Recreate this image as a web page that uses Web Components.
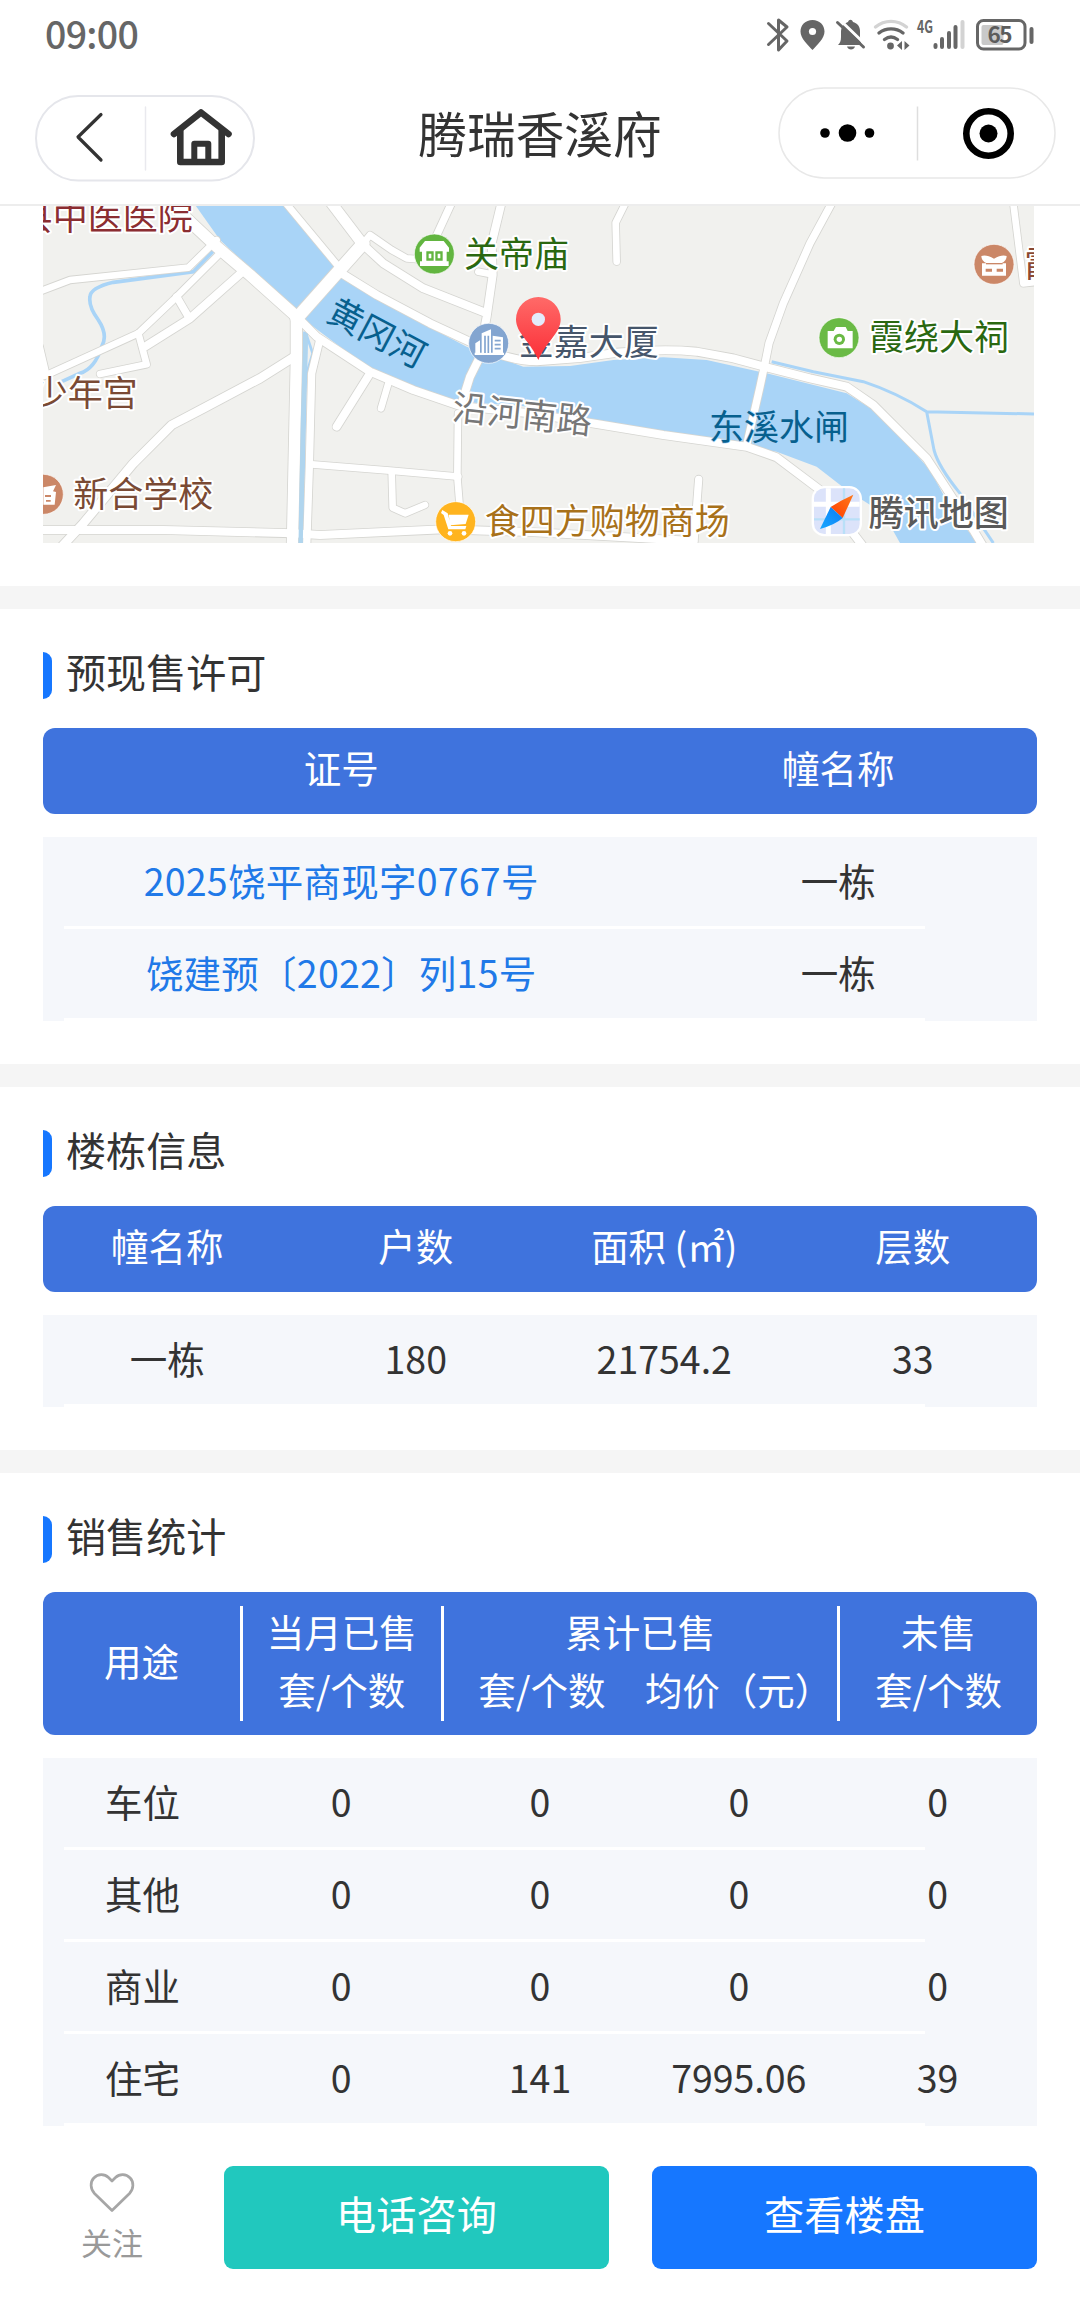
<!DOCTYPE html>
<html lang="zh-CN">
<head>
<meta charset="utf-8">
<title>腾瑞香溪府</title>
<style>
html,body{margin:0;padding:0;background:#fff}
body{width:1080px;height:2298px;overflow:hidden;font-family:"Noto Sans CJK SC","Noto Sans",sans-serif;color:#333}
</style>
</head>
<body>
<house-page></house-page>
<script>
const define=(name,html)=>customElements.define(name,class extends HTMLElement{
  constructor(){super();this.attachShadow({mode:'open'}).innerHTML=html;}
});

define('status-bar',`<style>
:host{display:flex;justify-content:space-between;align-items:flex-start;height:60px;padding:0 44px 0 45px;color:#666}
.time{font-size:37.500px;font-weight:500;line-height:60px;height:60px;margin-top:3px;letter-spacing:-.7px}
svg{display:block}
text{font-family:"Noto Sans CJK SC",sans-serif}
</style>
<div class="time">09:00</div>
<svg width="272" height="60" viewBox="764 0 272 60" fill="none" stroke="#666" stroke-linecap="round" stroke-linejoin="round">
  <path d="M768.500 23.500L787 41l-8.500 9V20l8.500 7-18.500 17.500" stroke-width="3"/>
  <path d="M812.500 20c-7 0-12 5-12 11.500 0 7 7 13 12 18.500 5-5.500 12-11.500 12-18.500C824.500 25 819.500 20 812.500 20z" fill="#666" stroke="none"/>
  <circle cx="812.500" cy="31.500" r="3.600" fill="#fff" stroke="none"/>
  <path d="M838 45c2-2 3-4 3-8v-5c0-6 4-9 7-10 1-3 4-3 5 0 4 1 7 4 7 9v6c0 4 1 6 2 8z" fill="#666" stroke="none"/>
  <path d="M847 46.500h8c-1 4-7 4-8 0z" fill="#666" stroke="none"/>
  <path d="M840 20l27 26" stroke="#fff" stroke-width="3"/>
  <path d="M837.500 22.500L863.500 47" stroke-width="3"/>
  <path d="M875.500 27c9-7.500 22-7.500 31 0" stroke="#d3d3d3" stroke-width="3.400"/>
  <path d="M879 33c7-5.500 17-5.500 24 0M884.500 39.500c4-3 9-3 13 0" stroke-width="3.400"/>
  <circle cx="890.500" cy="46" r="3.400" fill="#666" stroke="none"/>
  <path d="M902 41v9l-5-4.500zM904.500 41v9l5-4.500z" fill="#666" stroke="none"/>
  <text x="917" y="33" font-size="17" font-weight="700" fill="#666" stroke="none" textLength="16" lengthAdjust="spacingAndGlyphs">4G</text>
  <path d="M935.500 45v2M942 39v8M949 33v14M955.500 27v20" stroke-width="4"/>
  <path d="M962.500 22v25" stroke="#d3d3d3" stroke-width="4"/>
  <rect x="977.500" y="20.500" width="47.500" height="28.500" rx="6" stroke-width="3"/>
  <rect x="981.500" y="25" width="22" height="20" rx="2" fill="#c9c9c9" stroke="none"/>
  <path d="M1031.500 29v13" stroke-width="4"/>
  <text x="987.500" y="43" font-size="22.500" font-weight="600" fill="#5c5c5c" stroke="none" textLength="25">65</text>
</svg>`);

define('nav-bar',`<style>
:host{display:flex;justify-content:space-between;align-items:flex-start;box-sizing:border-box;height:146px;padding:0 24px 0 35px;border-bottom:2px solid #ededed}
h1{margin:0;font-size:48.700px;font-weight:400;line-height:70px;padding-top:37px;color:#333}
.start{width:270px;display:flex}
.end{width:281px;display:flex;justify-content:flex-end}
.back{margin-top:35px}.menu{margin-top:27px}
svg{display:block}
</style>
<div class="start"><svg class="back" width="220" height="87" viewBox="35 95 220 87" fill="none" stroke="#333" stroke-linejoin="round" stroke-linecap="round">
  <rect x="36" y="96" width="218" height="84.500" rx="42.200" stroke="#e5e6eb" stroke-width="2"/>
  <path d="M145.500 107v63" stroke="#e9e9ee" stroke-width="1.500"/>
  <path d="M101 114.500L78 137l23 23" stroke-width="3.200"/>
  <path d="M174 134L201 112.500l27.500 21.500" stroke-width="6.600"/>
  <path d="M180.300 131v31h41.400v-31" stroke-width="6.600"/>
  <path d="M194.300 162v-18.200h14V162" stroke-width="6"/>
</svg></div>
<h1>腾瑞香溪府</h1>
<div class="end"><svg class="menu" width="278" height="92" viewBox="778 87 278 92">
  <rect x="779" y="88" width="276" height="90" rx="45" fill="#fff" stroke="#e8e8e8" stroke-width="1.500"/>
  <path d="M917.500 106.500v54" stroke="#dedede" stroke-width="1.500"/>
  <circle cx="825" cy="133" r="4.800"/><circle cx="847.500" cy="133" r="8.800"/><circle cx="869.500" cy="133" r="4.800"/>
  <circle cx="988.500" cy="133.500" r="22.200" fill="none" stroke="#000" stroke-width="6.600"/><circle cx="988.500" cy="133.500" r="9"/>
</svg></div>`);

/* Road centre lines: [path, width] in map units (3 units per pixel). */
const roads=[
['M400-10L560 140L660 225L800 350',34],['M768 10L930 205',20],['M905 10L1000 135',32],['M1000 130L920 220L800 355',38],
['M935 220L1040 285L1200 370L1330 430Q1430 482 1520 484L1650 474L1760 458Q1900 445 2000 455L2110 475L2210 502L2340 535L2450 560L2530 615L2690 775L2830 990L2860 1040',24],
['M1000 130L1020 105L1085 150L1130 175L1170 178',20],['M1000 135L1060 190L1180 265L1370 340',24],
['M1414 10L1385 130L1388 225L1370 350L1345 480L1320 530L1295 610',24],['M1345 215L1385 223',20],['M1264 10L1218 110',22],
['M1786 10L1757 68L1760 185',20],['M2405 10L2340 130L2260 310L2217 430L2205 490L2190 560L2150 735',22],['M2950 10L2980 250L3030 245',20],
['M815 365L860 410L1020 515L1150 570L1290 618L1500 640L1700 672L1900 705L2150 740L2240 772L2370 870L2500 1040',24],
['M799 350L799 480L787 1040',34],['M868 425L845 520L838 800L830 1040',22],
['M30 274L120 240L475 203L560 120',20],['M575 155L430 300L325 400L50 525L30 532',20],['M30 440L50 525',18],['M630 222L480 355L345 440',24],
['M440 290L475 350',22],['M325 400L350 493L210 522',20],['M790 472L690 535L520 625L425 675L310 790L160 970L95 1040',26],
['M30 990L400 990L790 1000L870 1005L1240 988L1500 996L1990 1023',24],['M845 793L1080 812L1285 830',20],['M1085 815L1088 923L1125 940L1185 915',20],
['M1284 640L1282 830L1288 905L1290 985',20],['M1020 520L920 680',24],['M1075 550L1053 625',20],['M2006 838L1992 1025',22]];
const strokes=(c,e)=>roads.map(([d,w])=>`<path d="${d}" stroke="${c}" stroke-width="${w+e}"/>`).join('');

define('location-map',`<style>
:host{display:block;margin-left:43px;width:991px;height:337px;overflow:hidden}
svg{display:block}
.l text{font-family:"Noto Sans CJK SC",sans-serif;font-size:105px;stroke:#fff;stroke-width:12px;stroke-linejoin:round;paint-order:stroke}
.l .w{stroke:#a9d4f7;stroke-width:4px}
</style>
<svg width="991" height="337" viewBox="39 18 2973 1011">
<defs>
<linearGradient id="pin" x2="0" y2="1"><stop offset="0" stop-color="#ff6a68"/><stop offset="1" stop-color="#fb2f38"/></linearGradient>
<linearGradient id="or" x1="1" x2="0" y2="1"><stop offset="0" stop-color="#ff7a1c"/><stop offset="1" stop-color="#ff3c00"/></linearGradient>
<linearGradient id="bl" x1="1" x2="0" y2="1"><stop offset="0" stop-color="#0b7cf5"/><stop offset="1" stop-color="#19a7ff"/></linearGradient>
</defs>
<rect x="39" y="18" width="2973" height="1011" fill="#f1f1ee"/>
<path fill="#a9d4f7" d="M485 0L570 120L800 335L830 365L1010 500L1140 560L1290 605L1500 620L1700 665L2050 735L2160 742L2240 755L2360 800L2450 870L2560 940L2610 1029L2850 1040L2760 920L2700 810L2620 720L2530 630L2450 580L2210 520L2030 480L1900 472L1750 480L1620 498L1480 500L1310 440L1100 330L930 220L772 0Z"/>
<g fill="none" stroke="#a9d4f7">
<path d="M553 150L490 215L250 247Q182 263 180 290Q175 320 205 360Q235 405 215 440Q195 505 150 520L95 545" stroke-width="11"/>
<path d="M827 395L812 1040" stroke-width="15"/><path d="M828 400l20 60-18 60" stroke-width="8"/>
<path d="M2225 485L2350 515L2500 545Q2600 578 2690 635L3012 642M2690 635L2712 750Q2725 800 2790 880L2890 1029" stroke-width="9"/>
</g>
<g fill="none" stroke-linecap="round" stroke-linejoin="round">${strokes('#d5d5d1',5)}${strokes('#fff',0)}</g>
<path d="M827 400L819 660L812 1029" stroke="#b0d5ee" stroke-width="13" fill="none"/>
<g stroke="#fff" stroke-width="2">
<circle cx="1213" cy="162" r="60" fill="#62b540"/><circle cx="1376" cy="430" r="60" fill="#83a5d0"/><circle cx="1277" cy="965" r="60" fill="#ffb41f"/>
<circle cx="40" cy="883" r="60" fill="#cb8767"/><circle cx="2892" cy="193" r="60" fill="#cb8767"/><circle cx="2427" cy="413" r="60" fill="#6aba45"/>
</g>
<g fill="#fff">
<path d="M1185 123h56l16 20v12h-7v29h6v14h-86v-14h6v-29h-7v-12z"/><path d="M1189 154h22v28h-22zM1216 154h22v28h-22z" fill="#62b540"/><path d="M1196 161h8v14h-8zM1223 161h8v14h-8z"/>
<path d="M1336 430l14-9v42h-14zM1355 400l28-12v75h-28zM1388 407l31 5v51h-31zM1334 458h88v7h-88z"/>
<path d="M1365 407v52M1375 407v52M1394 422h18M1394 434h18M1394 446h18" stroke="#83a5d0" stroke-width="5"/>
<path d="M1237 930l16 10 10 38h46l-3 10h-51l-14-43-8-6zM1256 944h60l-9 28-46 4z"/><circle cx="1260" cy="1000" r="7"/><circle cx="1302" cy="1000" r="7"/>
<path d="M40 862l38-7-9 19 9 2-4 38H40z"/><path d="M45 885h18v6H45zM48 900h14v5H48z" fill="#cb8767"/>
<path d="M2854 168q14-6 38 8 24-14 38-8 0 16-16 22h14v37h-72v-37h14q-16-6-16-22z"/><path d="M2867 206h19v9h-19zM2900 206h19v9h-19z" fill="#cb8767"/><path d="M2868 191h50" stroke="#cb8767" stroke-width="4"/>
<path d="M2393 393h18l7-12h29l6 12h15v52h-75z"/><circle cx="2428" cy="418" r="17" fill="#6aba45"/><circle cx="2428" cy="418" r="8"/>
</g>
<g class="l">
<text x="-37" y="90" fill="#8b2d31">县中医医院</text><text x="8" y="617" fill="#7a4a34">少年宫</text><text x="130" y="920" fill="#7a4a34">新合学校</text>
<text x="1302" y="200" fill="#2a6810">关帝庙</text><text x="1466" y="466" fill="#46566b">金嘉大厦</text><text x="2517" y="451" fill="#2a6810">霞绕大祠</text>
<text x="2983" y="230" fill="#8a4933">霞</text><text class="w" x="2037" y="719" fill="#07608e">东溪水闸</text><text x="1364" y="1001" fill="#a8711a">食四方购物商场</text>
<text class="w" transform="translate(1041 399) rotate(28)" text-anchor="middle" y="38" fill="#07608e">黄冈河</text>
<text transform="translate(1477 643) rotate(6)" text-anchor="middle" y="38" fill="#777">沿河南路</text>
<text x="2516" y="977" fill="#5a5a5a" font-weight="500">腾讯地图</text>
</g>
<path d="M1525 291a67 67 0 0 1 67 67c0 42-43 66-67 122c-24-56-67-80-67-122a67 67 0 0 1 67-67z" fill="url(#pin)"/><circle cx="1525" cy="358" r="20" fill="#e3ebfb"/>
<rect x="2345" y="858" width="151" height="151" rx="38" fill="#fff"/>
<rect x="2352" y="865" width="137" height="137" rx="31" fill="#dce3fa"/>
<path d="M2395 865v137M2352 913h137" stroke="#fff" stroke-width="15"/><path d="M2442 865v137M2352 958h137" stroke="#b9e0f8" stroke-width="7"/>
<path d="M2470 884l-32 70-36-33q30-20 68-37z" fill="url(#or)"/><path d="M2370 987l32-66 36 33q-22 20-68 33z" fill="url(#bl)"/>
</svg>`);

define('info-section',`<style>
:host{display:block;padding:43px 43px 0;border-top:23px solid #f5f5f5}
header{display:flex;align-items:center;height:47px;margin-bottom:29px}
i{width:9px;height:47px;background:#1677ff;border-radius:0 9px 9px 0}
h2{margin:0 0 0 14px;padding-bottom:9px;font-size:40.100px;line-height:48px;font-weight:400;color:#333}
</style><header><i></i><h2><slot name="title"></slot></h2></header><slot></slot>`);

define('table-head',`<style>
:host{display:grid;grid-template-columns:var(--cols);align-items:center;text-align:center;width:994px;height:86px;background:#3f73dd;color:#fff;border-radius:12px;padding:10px 0 18px;box-sizing:border-box;font-size:37.500px;line-height:58px;white-space:nowrap;margin-bottom:23px}
:host([split]){padding:14px 0;height:143px}
</style><slot></slot>`);

define('head-group',`<style>
:host{display:grid;grid-template-columns:var(--inner,1fr);box-sizing:border-box;height:115px;align-content:center;border-right:3px solid #fff;line-height:58px;padding-bottom:7px}
:host([last]){border-right:0}
.top{grid-column:1/-1}
</style><div class="top"><slot name="top"></slot></div><slot></slot>`);

define('table-row',`<style>
:host{display:flex;flex-direction:column;width:994px;height:92px;background:#f5f7fb;font-size:37.500px;color:#333}
.cells{height:89px;box-sizing:border-box;padding-bottom:5px;display:grid;grid-template-columns:var(--cols);align-items:center;text-align:center;white-space:nowrap}
.line{height:3px;width:861px;margin-left:21px;background:#fff}
::slotted(a){color:#2079e8;letter-spacing:.25px}
</style><div class="cells"><slot></slot></div><div class="line"></div>`);

define('action-bar',`<style>
:host{display:flex;margin-top:40px;padding:0 43px 0 66px;align-items:flex-start}
.fav{width:92px;margin-right:66px;display:flex;flex-direction:column;align-items:center;color:#999;font-size:31px;line-height:40px}
.fav svg{margin:6px 0 8px}
button{font:inherit;border:0;margin:0;height:103px;width:385px;padding:0 0 8px;border-radius:9px;color:#fff;font-size:40.200px;line-height:1.400;background:#21c8be}
button+button{background:#1677ff;margin-left:43px}
</style>
<div class="fav"><svg width="46" height="42" viewBox="0 0 46 42" fill="none" stroke="#a6a6a6" stroke-width="2.700" stroke-linejoin="round"><path d="M23 38.500L5.500 21.500C1.200 17 1 10 4.800 6C9 1.500 15.500 1.600 19.500 5.500L23 9l3.500-3.500C30.500 1.600 37 1.500 41.200 6c3.800 4 3.600 11-.7 15.500z"/></svg><span>关注</span></div>
<button>电话咨询</button><button>查看楼盘</button>`);

define('house-page',`<style>
:host{display:block;width:1080px;height:2298px;background:#fff;overflow:hidden}
.permits{--cols:3fr 2fr;padding-bottom:43px}
.blocks{--cols:repeat(4,1fr);padding-bottom:43px}
.sales{--cols:repeat(5,1fr)}
location-map{margin-bottom:43px}
.two{--inner:1fr 1fr}
.sales table-head{grid-template-columns:200px 200.500px 396.500px 1fr}
</style>
<status-bar></status-bar><nav-bar></nav-bar><location-map></location-map>
<info-section class="permits"><span slot="title">预现售许可</span>
<table-head><span>证号</span><span>幢名称</span></table-head>
<table-row><a>2025饶平商现字0767号</a><span>一栋</span></table-row>
<table-row><a>饶建预〔2022〕列15号</a><span>一栋</span></table-row></info-section>
<info-section class="blocks"><span slot="title">楼栋信息</span>
<table-head><span>幢名称</span><span>户数</span><span>面积 (㎡)</span><span>层数</span></table-head>
<table-row><span>一栋</span><span>180</span><span>21754.2</span><span>33</span></table-row></info-section>
<info-section class="sales"><span slot="title">销售统计</span>
<table-head split><head-group><span slot="top">用途</span></head-group>
<head-group><span slot="top">当月已售</span><span>套/个数</span></head-group>
<head-group class="two"><span slot="top">累计已售</span><span>套/个数</span><span>均价（元）</span></head-group>
<head-group last><span slot="top">未售</span><span>套/个数</span></head-group></table-head>
<table-row><span>车位</span><span>0</span><span>0</span><span>0</span><span>0</span></table-row>
<table-row><span>其他</span><span>0</span><span>0</span><span>0</span><span>0</span></table-row>
<table-row><span>商业</span><span>0</span><span>0</span><span>0</span><span>0</span></table-row>
<table-row><span>住宅</span><span>0</span><span>141</span><span>7995.06</span><span>39</span></table-row></info-section>
<action-bar></action-bar>`);
</script>
</body>
</html>
